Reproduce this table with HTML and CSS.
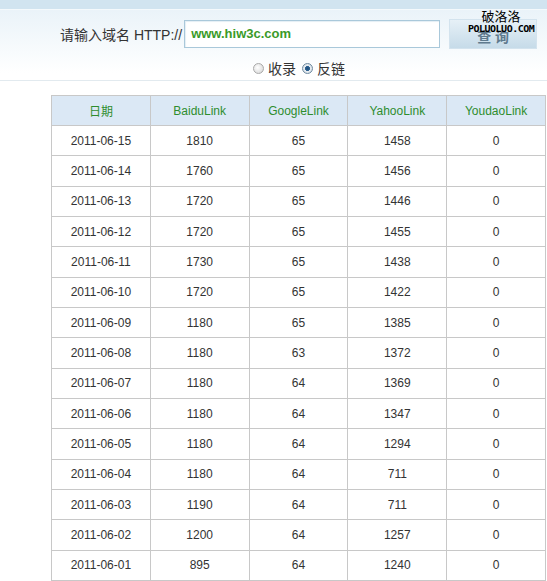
FILE: index.html
```html
<!DOCTYPE html>
<html>
<head>
<meta charset="utf-8">
<link rel="stylesheet" href="styles.css">
</head>
<body>
<div class="topbar"></div>
<div class="search">
  <div class="search-row">
    <span class="label">请输入域名 HTTP://</span>
    <div class="input">www.hiw3c.com</div>
    <div class="btn-wrap">
      <div class="btn">查 询</div>
      <div class="wm">
        <div class="wm-cn">破洛洛</div>
        <div class="wm-en">POLUOLUO.COM</div>
      </div>
    </div>
  </div>
  <div class="radio-row">
    <span class="radio"></span><span class="rlabel">收录</span>
    <span class="radio checked"></span><span class="rlabel">反链</span>
  </div>
</div>
<table class="data">
  <thead>
    <tr><th>日期</th><th>BaiduLink</th><th>GoogleLink</th><th>YahooLink</th><th>YoudaoLink</th></tr>
  </thead>
  <tbody>
    <tr><td>2011-06-15</td><td>1810</td><td>65</td><td>1458</td><td>0</td></tr>
    <tr><td>2011-06-14</td><td>1760</td><td>65</td><td>1456</td><td>0</td></tr>
    <tr><td>2011-06-13</td><td>1720</td><td>65</td><td>1446</td><td>0</td></tr>
    <tr><td>2011-06-12</td><td>1720</td><td>65</td><td>1455</td><td>0</td></tr>
    <tr><td>2011-06-11</td><td>1730</td><td>65</td><td>1438</td><td>0</td></tr>
    <tr><td>2011-06-10</td><td>1720</td><td>65</td><td>1422</td><td>0</td></tr>
    <tr><td>2011-06-09</td><td>1180</td><td>65</td><td>1385</td><td>0</td></tr>
    <tr><td>2011-06-08</td><td>1180</td><td>63</td><td>1372</td><td>0</td></tr>
    <tr><td>2011-06-07</td><td>1180</td><td>64</td><td>1369</td><td>0</td></tr>
    <tr><td>2011-06-06</td><td>1180</td><td>64</td><td>1347</td><td>0</td></tr>
    <tr><td>2011-06-05</td><td>1180</td><td>64</td><td>1294</td><td>0</td></tr>
    <tr><td>2011-06-04</td><td>1180</td><td>64</td><td>711</td><td>0</td></tr>
    <tr><td>2011-06-03</td><td>1190</td><td>64</td><td>711</td><td>0</td></tr>
    <tr><td>2011-06-02</td><td>1200</td><td>64</td><td>1257</td><td>0</td></tr>
    <tr><td>2011-06-01</td><td>895</td><td>64</td><td>1240</td><td>0</td></tr>
  </tbody>
</table>
</body>
</html>
```
FILE: styles.css
```css
html, body {
  margin: 0;
  padding: 0;
  background: #ffffff;
  font-family: "Liberation Sans", "Noto Sans CJK SC", sans-serif;
  color: #333333;
}
.topbar {
  height: 9px;
  background: #d1e4f0;
  border-bottom: 1px solid #f4f9fc;
}
.search {
  height: 70px;
  background: linear-gradient(#eaf3f9, #ffffff 90%);
  border-bottom: 1px solid #e2eaef;
}
.search-row {
  display: flex;
  align-items: center;
  padding-top: 9px;
  padding-left: 60px;
}
.label {
  font-size: 14px;
  color: #333;
  margin-right: 2px;
}
.input {
  box-sizing: border-box;
  width: 256px;
  height: 28px;
  border: 1px solid #a9c8da;
  background: #ffffff;
  color: #3a9a28;
  font-weight: bold;
  font-size: 13px;
  line-height: 26px;
  padding-left: 6px;
  box-shadow: inset 1px 1px 1px #e4eef4;
}
.btn-wrap {
  position: relative;
  margin-left: 9px;
}
.btn {
  box-sizing: border-box;
  width: 88px;
  height: 30px;
  background: linear-gradient(#e6f0f7, #c6dbe9);
  border: 1px solid #d3e3ee;
  color: #5f7a8e;
  font-size: 14px;
  font-weight: bold;
  text-align: center;
  line-height: 34px;
}
.wm {
  position: absolute;
  left: 14px;
  top: -11px;
  width: 76px;
  text-align: center;
  color: #000;
}
.wm-cn {
  font-size: 13px;
  line-height: 17px;
}
.wm-en {
  font-family: "DejaVu Sans Mono", monospace;
  font-weight: bold;
  font-size: 10px;
  line-height: 10px;
  letter-spacing: -0.5px;
  transform: scaleY(0.8);
}
.radio-row {
  display: flex;
  align-items: center;
  padding-left: 253px;
  margin-top: 9px;
  font-size: 14px;
}
.radio {
  box-sizing: border-box;
  width: 11px;
  height: 11px;
  border-radius: 50%;
  border: 1px solid #a9a9a9;
  background: radial-gradient(circle at 40% 40%, #ffffff, #d2d2d2);
  margin-right: 4px;
}
.radio.checked {
  border-color: #6f8aa0;
  background: radial-gradient(circle, #1f4d7a 0, #2b5f8f 2.2px, #e9eef2 2.8px, #c7d2da 100%);
}
.rlabel {
  margin-right: 6px;
  color: #333;
}
.data {
  margin-top: 14px;
  margin-left: 51px;
  width: 495px;
  border-collapse: collapse;
  table-layout: fixed;
  font-size: 12px;
}
.data th, .data td {
  border: 1px solid #c8c8c8;
  text-align: center;
  padding: 0;
}
.data th {
  height: 29px;
  background: #dbe8f5;
  color: #2e8d2e;
  font-weight: normal;
}
.data td {
  height: 29.33px;
  color: #333;
}
```
